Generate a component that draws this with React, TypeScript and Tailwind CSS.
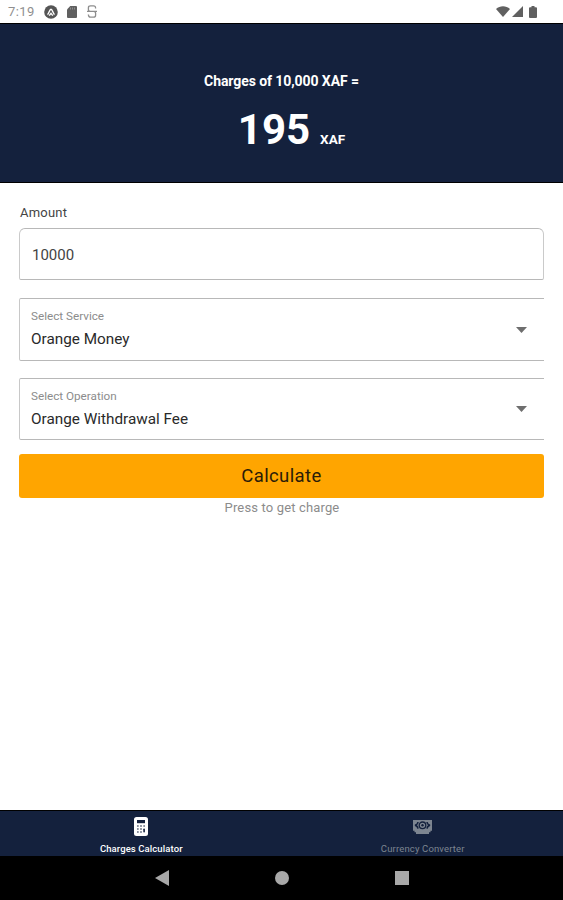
import React from "react";

interface SelectFieldProps {
  label: string;
  value: string;
  className?: string;
}

const SelectField: React.FC<SelectFieldProps> = ({ label, value, className = "" }) => {
  return (
    <button
      type="button"
      className={`flex w-full items-center justify-between rounded-l-[2px] border border-r-0 border-[#b8b8b8] border-l-[#c8c8c8] pl-[11px] pr-[17px] text-left ${className}`}
    >
      <span className="flex flex-col pb-[2px]">
        <span className="text-[11.7px] leading-[16px] text-[#8c8c8c]">{label}</span>
        <span className="mt-[5px] text-[15.3px] leading-[20px] text-[#2a2a2a]">{value}</span>
      </span>
      <svg className="h-[6px] w-[11px]" viewBox="0 0 11 6" fill="#6e6e6e">
        <path d="M0 0h11L5.5 6z" />
      </svg>
    </button>
  );
};

// Notification icons on the left, signal and battery on the right
const StatusBar: React.FC = () => {
  return (
    <div className="flex h-[23px] items-center bg-white pl-[8px] pr-[26px]">
      <span className="w-[36px] text-[13px] leading-[23px] tracking-[0.4px] text-[#8f8f8f]">7:19</span>
      <svg className="h-[14px] w-[14px]" viewBox="0 0 14 14">
        <circle cx="7" cy="7" r="6.8" fill="#555" />
        <path d="M3.5 9.6C5 8.4 5.6 4.200 7 4.200s2 4.200 3.500 5.400M5.200 10.600 7 8.400l1.800 2.200" fill="none" stroke="#fff" strokeWidth="1.4" />
      </svg>
      <svg className="ml-[9px] h-[12px] w-[10px]" viewBox="0 0 10 12">
        <path d="M3.2 0H9a1 1 0 0 1 1 1v10a1 1 0 0 1-1 1H1a1 1 0 0 1-1-1V3.5z" fill="#606060" />
        <path d="M3.5 1.5v2M5.5 1.5v2M7.5 1.5v2" stroke="#999" strokeWidth="0.8" />
      </svg>
      <svg className="ml-[10px] h-[13px] w-[10px]" viewBox="0 0 10 13" fill="none" stroke="#8d8d8d" strokeWidth="1.3">
        <path d="M8.6 3.4Q8.6.8 6.500.8h-3Q1.400.8 1.400 2.700v1.700Q1.400 6.300 3.500 6.300h3q2.100 0 2.100 2v1.900q0 2-2.100 2h-3q-2.100 0-2.100-2.600M0 6.300h10" />
      </svg>
      <div className="ml-auto flex items-center">
        <svg className="h-[11px] w-[14px]" viewBox="0 0 14 11" fill="#606060">
          <path d="M0 3C4 -.8 10 -.8 14 3L7 11z" />
        </svg>
        <svg className="ml-[2px] h-[11px] w-[11px]" viewBox="0 0 11 11" fill="#606060">
          <path d="M11 0v11H0z" />
        </svg>
        <svg className="ml-[6px] h-[12px] w-[8px]" viewBox="0 0 8 12" fill="#606060">
          <path d="M2.5 0h3v1.200H7a1 1 0 0 1 1 1V11a1 1 0 0 1-1 1H1a1 1 0 0 1-1-1V2.200a1 1 0 0 1 1-1h1.500z" />
        </svg>
      </div>
    </div>
  );
};

const CalculatorIcon: React.FC = () => (
  <svg className="h-[19px] w-[14px]" viewBox="0 0 14 19">
    <rect width="14" height="19" rx="2.5" fill="#fff" />
    <rect x="3" y="3" width="8" height="3.2" fill="#14213d" />
    <g fill="#14213d">
      <circle cx="3.9" cy="9" r="0.8" />
      <circle cx="7" cy="9" r="0.8" />
      <circle cx="10.1" cy="9" r="0.8" />
      <circle cx="3.9" cy="12" r="0.8" />
      <circle cx="7" cy="12" r="0.8" />
      <circle cx="3.9" cy="15" r="0.8" />
      <circle cx="7" cy="15" r="0.8" />
      <rect x="9.3" y="11.4" width="1.6" height="4.2" rx="0.8" />
    </g>
  </svg>
);

const CashIcon: React.FC = () => (
  <svg className="h-[14px] w-[19px]" viewBox="0 0 19 14">
    <path d="M0 0h19v10.800h-1.500V12.200H16V14H3v-1.800H1.500v-1.400H0z" fill="#7d8590" />
    <path d="M5 2A4 4 0 0 1 2 5.300 4 4 0 0 1 5 8.600M14 2a4 4 0 0 0 3 3.300A4 4 0 0 0 14 8.600" fill="none" stroke="#14213d" strokeWidth="1.5" />
    <circle cx="9.5" cy="5.3" r="3.3" fill="none" stroke="#14213d" strokeWidth="1.3" />
    <circle cx="9.5" cy="5.3" r="1.2" fill="#14213d" />
  </svg>
);

export default function App() {
  return (
    <div className="flex h-[900px] w-[563px] flex-col overflow-hidden bg-white font-['Roboto',sans-serif]">
      <StatusBar />

      {/* Result */}
      <header className="flex h-[160px] flex-col items-center border-y border-black bg-[#14213d] pt-[47px] text-white">
        <p className="text-[14px] font-bold leading-[20px] tracking-[-0.08px]">Charges of 10,000 XAF =</p>
        <div className="mt-[13px] flex items-baseline pl-[20px]">
          <span className="text-[42px] font-bold leading-[52px]">195</span>
          <span className="ml-[10px] text-[13.5px] font-bold">XAF</span>
        </div>
      </header>

      <main className="flex flex-1 flex-col pl-[19px] pr-[19px] pt-[21px]">
        <label className="pl-[1px] text-[13px] leading-[17px] tracking-[0.2px] text-[#444]" htmlFor="amount">
          Amount
        </label>
        <input
          id="amount"
          defaultValue="10000"
          className="mt-[7px] h-[52px] w-full rounded-t-[6px] rounded-b-[2px] border border-[#b8b8b8] border-x-[#cacaca] px-[12px] pt-[2px] text-[15px] text-[#444] outline-none"
        />
        <SelectField label="Select Service" value="Orange Money" className="mt-[18px] h-[63px]" />
        <SelectField label="Select Operation" value="Orange Withdrawal Fee" className="mt-[17px] h-[62px]" />
        <button type="button" className="mt-[14px] h-[44px] rounded-[3px] bg-[#ffa500] pt-[2px] text-[18.5px] tracking-[0.4px] text-[#2a1c08]">
          Calculate
        </button>
        <p className="mt-[2px] pl-[1px] text-center text-[13px] leading-[16px] tracking-[0.15px] text-[#8c8c8c]">Press to get charge</p>
      </main>

      {/* Tabs */}
      <nav className="flex h-[46px] border-t border-black bg-[#14213d] text-[9.5px] leading-[12px]">
        <div className="flex flex-1 flex-col items-center pt-[6px] text-white">
          <CalculatorIcon />
          <span className="mt-[7px] pl-[1px] font-medium tracking-[0.1px]">Charges Calculator</span>
        </div>
        <div className="flex flex-1 flex-col items-center pt-[9px] text-[#7d8590]">
          <CashIcon />
          <span className="mt-[9px] pl-[1px] tracking-[0.15px]">Currency Converter</span>
        </div>
      </nav>

      {/* Android navigation */}
      <div className="flex h-[44px] items-center justify-center bg-black">
        <svg className="h-[16px] w-[14px]" viewBox="0 0 14 16" fill="#a8a8a8">
          <path d="M14 0v16L0 8z" />
        </svg>
        <div className="ml-[106px] h-[14px] w-[14px] rounded-full bg-[#a8a8a8]" />
        <div className="ml-[106px] h-[14px] w-[14px] bg-[#a8a8a8]" />
      </div>
    </div>
  );
}
